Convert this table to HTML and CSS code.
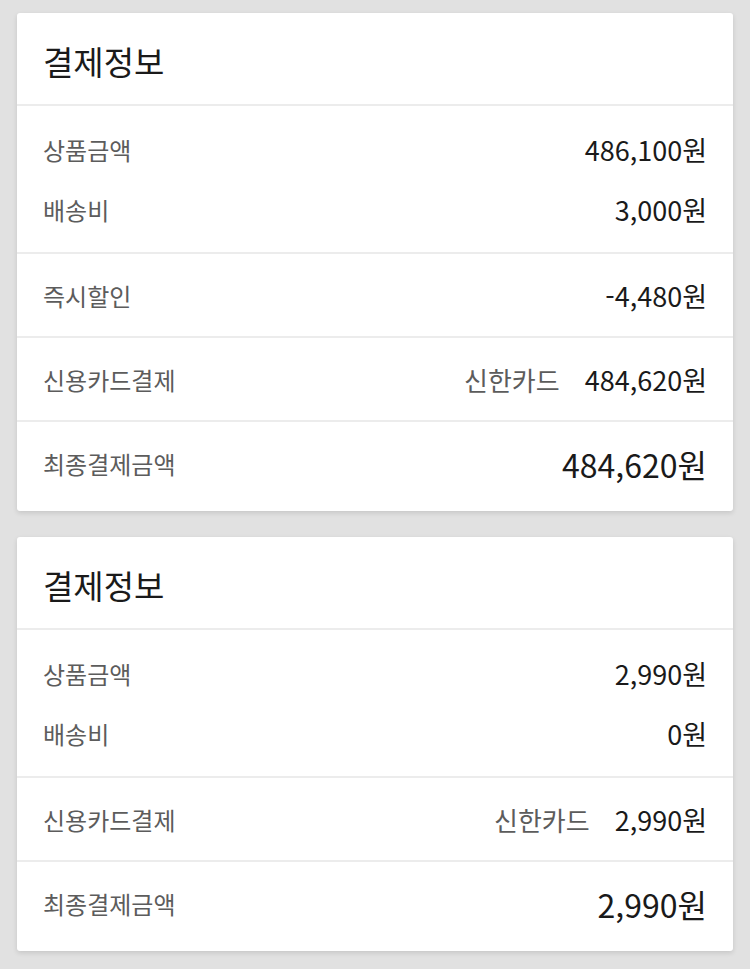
FILE: index.html
```html
<!DOCTYPE html>
<html lang="ko">
  <head>
    <meta charset="UTF-8" />
    <meta name="viewport" content="width=device-width, initial-scale=1.0" />
    <title>결제정보</title>
    <link rel="stylesheet" href="styles.css">
  </head>
  <body>
    <div class="card">
      <h2 class="card-title">결제정보</h2>

      <div class="group">
        <div class="row">
          <span class="label">상품금액</span>
          <span class="value">486,100원</span>
        </div>
        <div class="row">
          <span class="label">배송비</span>
          <span class="value">3,000원</span>
        </div>
      </div>

      <div class="group">
        <div class="row">
          <span class="label">즉시할인</span>
          <span class="value">-4,480원</span>
        </div>
      </div>

      <div class="group">
        <div class="row">
          <span class="label">신용카드결제</span>
          <span class="value"><span class="card-name">신한카드</span>484,620원</span>
        </div>
      </div>

      <div class="group total">
        <div class="row">
          <span class="label">최종결제금액</span>
          <span class="value">484,620원</span>
        </div>
      </div>
    </div>

    <div class="card">
      <h2 class="card-title">결제정보</h2>

      <div class="group">
        <div class="row">
          <span class="label">상품금액</span>
          <span class="value">2,990원</span>
        </div>
        <div class="row">
          <span class="label">배송비</span>
          <span class="value">0원</span>
        </div>
      </div>

      <div class="group">
        <div class="row">
          <span class="label">신용카드결제</span>
          <span class="value"><span class="card-name">신한카드</span>2,990원</span>
        </div>
      </div>

      <div class="group total">
        <div class="row">
          <span class="label">최종결제금액</span>
          <span class="value">2,990원</span>
        </div>
      </div>
    </div>
  </body>
</html>
```

FILE: styles.css
```css
:root {
  --bg: #e1e1e1;
  --line: #ececec;
  --text: #1a1a1a;
  --muted: #5c5c5c;
}

body {
  margin: 0;
  padding: 13px 17px 17px;
  background: var(--bg);
  font-family: "Noto Sans CJK KR", "Noto Sans", sans-serif;
  color: var(--text);
  display: flex;
  flex-direction: column;
  gap: 26px;
}

.card {
  background: #fff;
  border-radius: 3px;
  box-shadow: 0 2px 5px rgba(0, 0, 0, 0.12);
}

.card-title {
  margin: 0;
  height: 93px;
  display: flex;
  align-items: center;
  padding: 4px 26px 0;
  box-sizing: border-box;
  font-size: 33px;
  font-weight: 400;
  border-bottom: 2px solid var(--line);
}

.group {
  padding: 11px 26px;
  border-bottom: 2px solid var(--line);
}
/* first block under the title holds two rows */
.card-title + .group {
  padding: 13px 26px;
}
.group:last-child {
  border-bottom: none;
}

.row {
  display: flex;
  justify-content: space-between;
  align-items: center;
  height: 60px;
}

.label {
  font-size: 24px;
  color: var(--muted);
  padding-top: 1px;
}

.value {
  font-size: 27px;
  color: var(--text);
  padding-top: 1px;
}

.card-name {
  font-size: 26px;
  color: var(--muted);
  margin-right: 25px;
}

.total {
  padding: 11px 26px 18px;
}
.total .value {
  font-size: 32px;
}
```
